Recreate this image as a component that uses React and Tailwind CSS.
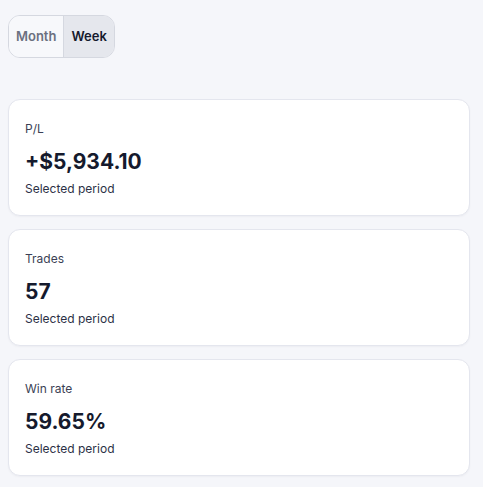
const stats = [
  { label: 'P/L', value: '+$5,934.10' },
  { label: 'Trades', value: '57' },
  { label: 'Win rate', value: '59.65%' },
];

const StatCard = ({ label, value }) => (
  <div className="bg-white border border-[#e4e6ee] rounded-xl px-4 pt-[21px] pb-[18px] shadow-[0_1px_2px_rgba(16,24,40,0.04)]">
    <p className="text-xs leading-4 text-[#3b3f55]">{label}</p>
    <p className="mt-[11px] text-[21px] leading-7 font-bold text-[#151a2d]">{value}</p>
    <p className="mt-[5px] text-xs leading-4 text-[#2c3146]">Selected period</p>
  </div>
);

export default function App() {
  return (
    <div
      className="min-h-screen bg-[#f5f6fa] pl-2 pr-[13px] pt-[15px] pb-3"
      style={{ fontFamily: 'Inter, "Noto Sans", sans-serif' }}
    >
      <div className="inline-flex h-[43px] border border-[#d5d8e0] rounded-xl overflow-hidden text-[13px] font-semibold">
        <button className="px-[7px] bg-[#f7f8fb] text-[#6b7080]">Month</button>
        <button className="px-[7px] bg-[#e5e7ed] text-[#151a2d] border-l border-[#d5d8e0]">Week</button>
      </div>
      <div className="mt-[41px] flex flex-col gap-[13px]">
        {stats.map((s) => (
          <StatCard key={s.label} {...s} />
        ))}
      </div>
    </div>
  );
}
